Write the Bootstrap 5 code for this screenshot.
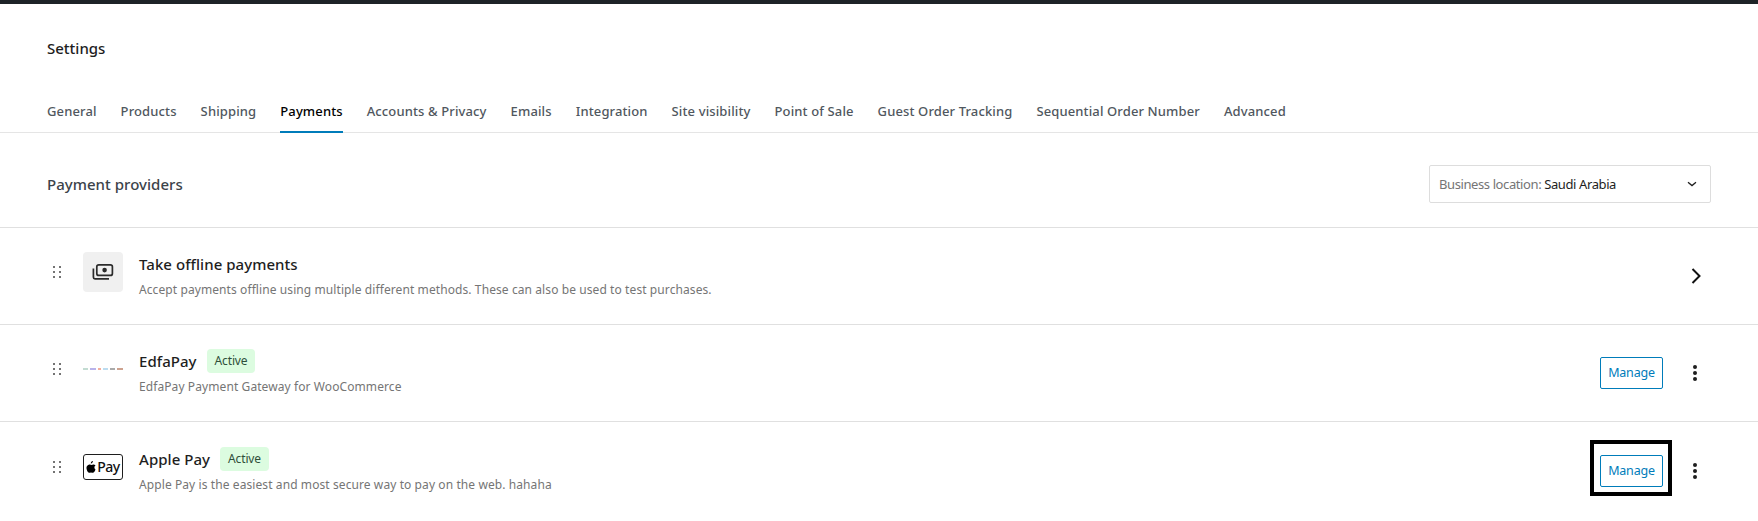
<!DOCTYPE html>
<html lang="en">
<head>
<meta charset="utf-8">
<title>Settings</title>
<link href="https://cdn.jsdelivr.net/npm/bootstrap@5.3.0/dist/css/bootstrap.min.css" rel="stylesheet">
<style>
body{font-family:"Noto Sans","Open Sans",sans-serif;font-size:13px;color:#1e1e1e;background:#fff;overflow:hidden}
.top-strip{height:4px;background:#1d2327}
.page-title{font-size:15px;font-weight:500;line-height:20px;padding:34px 47px 0;margin:0;color:#1e1e1e;height:84px}
.tabs-bar{border-bottom:1px solid #e5e5e5;padding:0 47px;height:45px;gap:24px;flex-wrap:nowrap}
.tabs-bar .nav-link{padding:13px 0 0;height:45px;line-height:20px;font-size:13px;font-weight:500;color:#50575e;letter-spacing:.125px;white-space:nowrap}
.tabs-bar .nav-link.active{color:#000;border-bottom:2px solid #007cba;margin-bottom:-1px}
.providers-head{padding:32px 47px 24px;border-bottom:1px solid #e0e0e0;height:95px}
.providers-title{font-size:15px;font-weight:500;color:#3c434a;margin:0;line-height:20px;letter-spacing:.03px}
.loc-box{width:282px;height:38px;border:1px solid #ddd;border-radius:2px;padding:2px 12px 0 9px;font-size:13px;letter-spacing:-.4px}
.loc-box .loc-label{color:#757575}
.loc-box .loc-value{color:#1e1e1e}
.loc-box svg{margin-top:-2px}
.provider-row.list-group-item{padding:24px 47px 24px 47px;border-color:#e0e0e0;border-width:0 0 1px;height:97px;background:transparent}
.grip{width:40px;height:40px;padding-left:6px}
.logo-slot{width:40px;height:40px;flex:none;margin-right:16px;margin-left:-4px}
.logo-tile{background:#f0f0f0;border-radius:4px}
.pay-mark{width:40px;height:26px;border:1px solid #1e1e1e;border-radius:3px;font-size:14px;font-weight:500;color:#111;line-height:1;letter-spacing:-.4px;gap:1px}
.prov-name{font-size:15px;font-weight:500;line-height:24px;color:#1e1e1e;letter-spacing:.05px}
.prov-desc{font-size:12px;line-height:20px;margin-top:4px;color:#757575;letter-spacing:.09px}
.state-pill.badge{background:#dcfce0;color:#2f4f3a;font-size:12px;font-weight:400;line-height:16px;padding:4px 8px;border-radius:4px;margin-left:10px;letter-spacing:-.15px}
.manage-btn.btn{width:63px;height:32px;padding:0;font-size:12.5px;line-height:30px;color:#007cba;border:1px solid #007cba;border-radius:2px;background:#fff;letter-spacing:-.2px}
.manage-cell{position:relative}
.callout-frame{position:absolute;left:-10px;top:-15px;width:82px;height:56px;border:4px solid #000;pointer-events:none}
.kebab{width:18px;margin-left:23px;margin-right:-1px;gap:2px}
.kebab-dot{width:4px;height:4px;border-radius:50%;background:#1e1e1e}
.row-actions{margin-right:8px}
.arrow-cell{margin-right:7px}
</style>
</head>
<body>
<div class="top-strip"></div>
<h1 class="page-title">Settings</h1>
<nav class="nav tabs-bar">
  <a class="nav-link" href="#">General</a>
  <a class="nav-link" href="#">Products</a>
  <a class="nav-link" href="#">Shipping</a>
  <a class="nav-link active" href="#">Payments</a>
  <a class="nav-link" href="#">Accounts &amp; Privacy</a>
  <a class="nav-link" href="#">Emails</a>
  <a class="nav-link" href="#">Integration</a>
  <a class="nav-link" href="#">Site visibility</a>
  <a class="nav-link" href="#">Point of Sale</a>
  <a class="nav-link" href="#">Guest Order Tracking</a>
  <a class="nav-link" href="#">Sequential Order Number</a>
  <a class="nav-link" href="#">Advanced</a>
</nav>
<div class="providers-head d-flex align-items-center justify-content-between">
  <h2 class="providers-title">Payment providers</h2>
  <div class="loc-box d-flex align-items-center justify-content-between">
    <span><span class="loc-label">Business location:</span> <span class="loc-value">Saudi Arabia</span></span>
    <svg width="12" height="12" viewBox="0 0 12 12" fill="none" stroke="#1e1e1e" stroke-width="1.3"><path d="M2 4.300 6 7.600 10 4.300"/></svg>
  </div>
</div>
<div class="list-group list-group-flush">
  <div class="list-group-item provider-row d-flex justify-content-between align-items-center">
    <div class="d-flex align-items-start">
      <div class="grip d-flex align-items-center"><svg width="8" height="12" viewBox="0 0 8 12" fill="#444"><circle cx="1" cy="1" r="1"/><circle cx="7" cy="1" r="1"/><circle cx="1" cy="6" r="1"/><circle cx="7" cy="6" r="1"/><circle cx="1" cy="11" r="1"/><circle cx="7" cy="11" r="1"/></svg></div>
      <div class="logo-slot logo-tile d-flex align-items-center justify-content-center">
        <svg width="24" height="24" viewBox="0 0 24 24" fill="none" stroke="#2b2b2b" stroke-width="1.700"><rect x="5.800" y="4.800" width="15.600" height="10.600" rx="2"/><circle cx="13.600" cy="10.100" r="2.300" fill="#2b2b2b" stroke="none"/><path d="M2.400 8.500v8.800a1.600 1.600 0 0 0 1.600 1.600H18"/></svg>
      </div>
      <div>
        <div class="prov-name">Take offline payments</div>
        <div class="prov-desc">Accept payments offline using multiple different methods. These can also be used to test purchases.</div>
      </div>
    </div>
    <div class="arrow-cell d-flex">
      <svg width="16" height="18" viewBox="0 0 16 18" fill="none" stroke="#111" stroke-width="2"><path d="M4.500 2 11.500 9 4.500 16"/></svg>
    </div>
  </div>
  <div class="list-group-item provider-row d-flex justify-content-between align-items-center">
    <div class="d-flex align-items-start">
      <div class="grip d-flex align-items-center"><svg width="8" height="12" viewBox="0 0 8 12" fill="#444"><circle cx="1" cy="1" r="1"/><circle cx="7" cy="1" r="1"/><circle cx="1" cy="6" r="1"/><circle cx="7" cy="6" r="1"/><circle cx="1" cy="11" r="1"/><circle cx="7" cy="11" r="1"/></svg></div>
      <div class="logo-slot d-flex align-items-center justify-content-center">
        <svg width="40" height="2" viewBox="0 0 40 2"><rect width="5" height="2" fill="#c3dcd2"/><rect x="7" width="6" height="2" fill="#b9b3ea"/><rect x="15" width="3" height="2" fill="#f4ae9c"/><rect x="20" width="5" height="2" fill="#bcdcf0"/><rect x="27" width="5" height="2" fill="#aaa"/><rect x="34" width="6" height="2" fill="#cda28f"/></svg>
      </div>
      <div>
        <div class="d-flex align-items-center"><span class="prov-name">EdfaPay</span><span class="badge state-pill">Active</span></div>
        <div class="prov-desc">EdfaPay Payment Gateway for WooCommerce</div>
      </div>
    </div>
    <div class="row-actions d-flex align-items-center">
      <a class="btn manage-btn" href="#">Manage</a>
      <div class="kebab d-flex flex-column align-items-center"><span class="kebab-dot"></span><span class="kebab-dot"></span><span class="kebab-dot"></span></div>
    </div>
  </div>
  <div class="list-group-item provider-row d-flex justify-content-between align-items-center">
    <div class="d-flex align-items-start">
      <div class="grip d-flex align-items-center"><svg width="8" height="12" viewBox="0 0 8 12" fill="#444"><circle cx="1" cy="1" r="1"/><circle cx="7" cy="1" r="1"/><circle cx="1" cy="6" r="1"/><circle cx="7" cy="6" r="1"/><circle cx="1" cy="11" r="1"/><circle cx="7" cy="11" r="1"/></svg></div>
      <div class="logo-slot d-flex align-items-center justify-content-center">
        <div class="pay-mark d-flex align-items-center justify-content-center">
          <svg width="10" height="12" viewBox="0 0 10 12" fill="#000"><path d="M7 0c.1 1-.8 2.400-2.200 2.500C4.700 1.300 5.700.2 7 0zM8.400 6.300c0-1.200 1-1.800 1.100-1.900-.6-.9-1.600-1-1.900-1-.8-.1-1.600.5-2 .5s-1.100-.5-1.800-.5C2.700 3.400 0 4.300.6 7.900 1 10 2.200 11.800 3.200 11.800c.6 0 1-.4 1.800-.4s1.100.4 1.800.4c1.100 0 2.300-2 2.700-3.400-.1 0-1.100-.5-1.100-2.100z"/></svg><span>Pay</span>
        </div>
      </div>
      <div>
        <div class="d-flex align-items-center"><span class="prov-name">Apple Pay</span><span class="badge state-pill">Active</span></div>
        <div class="prov-desc">Apple Pay is the easiest and most secure way to pay on the web. hahaha</div>
      </div>
    </div>
    <div class="row-actions d-flex align-items-center">
      <div class="manage-cell">
        <a class="btn manage-btn" href="#">Manage</a>
        <span class="callout-frame"></span>
      </div>
      <div class="kebab d-flex flex-column align-items-center"><span class="kebab-dot"></span><span class="kebab-dot"></span><span class="kebab-dot"></span></div>
    </div>
  </div>
</div>
<script src="https://cdn.jsdelivr.net/npm/bootstrap@5.3.0/dist/js/bootstrap.bundle.min.js"></script>
</body>
</html>
